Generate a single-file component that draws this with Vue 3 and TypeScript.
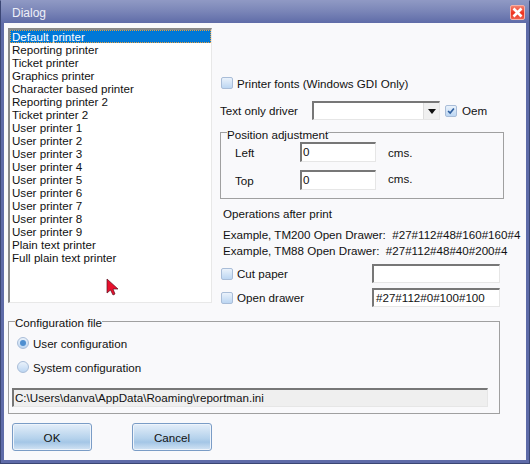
<template>
  <div class="window">
    <div class="titlebar">
      <span class="title">Dialog</span>
      <div class="close">
        <svg width="11" height="11" viewBox="0 0 11 11">
          <path d="M1.5 1.5 L9.5 9.5 M9.5 1.5 L1.5 9.5" stroke="#fff" stroke-width="2.6" />
        </svg>
      </div>
    </div>
    <div class="client">
      <div class="top">
        <ul class="list">
          <li v-for="(name, index) in printers" :key="name" :class="{ selected: index === 0 }">{{ name }}</li>
        </ul>
        <div class="options">
          <label class="check fonts"><span class="box"></span>Printer fonts (Windows GDI Only)</label>
          <div class="driver">
            <span class="driver-label">Text only driver</span>
            <div class="combo sunken">
              <span class="arrow"><i></i></span>
            </div>
            <label class="check oem">
              <span class="box">
                <svg width="12" height="12" viewBox="0 0 12 12">
                  <path d="M2.5 6 L5 8.5 L9.5 3" fill="none" stroke="#2f5f9f" stroke-width="2" />
                </svg>
              </span>
              Oem
            </label>
          </div>
          <fieldset class="position">
            <legend>Position adjustment</legend>
            <div v-for="row in positions" :key="row" class="pos-row">
              <span class="pos-label">{{ row }}</span>
              <div class="field sunken pos-input">0</div>
              <span class="unit">cms.</span>
            </div>
          </fieldset>
          <div class="ops-title">Operations after print</div>
          <div class="example first">Example, TM200 Open Drawer:&nbsp; #27#112#48#160#160#4</div>
          <div class="example">Example, TM88 Open Drawer:&nbsp; #27#112#48#40#200#4</div>
          <div class="op-row">
            <label class="check"><span class="box"></span>Cut paper</label>
            <div class="field sunken op-input"></div>
          </div>
          <div class="op-row second">
            <label class="check"><span class="box"></span>Open drawer</label>
            <div class="field sunken op-input">#27#112#0#100#100</div>
          </div>
        </div>
      </div>
      <fieldset class="config">
        <legend>Configuration file</legend>
        <label class="radio"><span class="dot on"></span>User configuration</label>
        <label class="radio"><span class="dot"></span>System configuration</label>
        <div class="field sunken path">C:\Users\danva\AppData\Roaming\reportman.ini</div>
      </fieldset>
      <div class="buttons">
        <button class="btn">OK</button>
        <button class="btn">Cancel</button>
      </div>
    </div>
    <svg class="cursor" width="14" height="18" viewBox="0 0 14 18">
      <path d="M1 1 L1 15 L4.5 12 L7 17 L9 16 L7 11 L12 11 Z" fill="#e8112d" stroke="#5a1020" stroke-width="0.7" />
    </svg>
  </div>
</template>

<script setup lang="ts">
const printers: string[] = [
  'Default printer',
  'Reporting printer',
  'Ticket printer',
  'Graphics printer',
  'Character based printer',
  'Reporting printer 2',
  'Ticket printer 2',
  'User printer 1',
  'User printer 2',
  'User printer 3',
  'User printer 4',
  'User printer 5',
  'User printer 6',
  'User printer 7',
  'User printer 8',
  'User printer 9',
  'Plain text printer',
  'Full plain text printer'
]

const positions: string[] = ['Left', 'Top']
</script>

<style>
html,
body {
  margin: 0;
  background: #fff;
}
</style>

<style scoped>
.window {
  position: relative;
  width: 530px;
  height: 464px;
  box-sizing: border-box;
  display: flex;
  flex-direction: column;
  background: #5e6ba8;
  border: 1px solid #3b4674;
  border-top-color: #8f98c4;
  padding: 0 3px 3px;
  font-family: "Liberation Sans", Arial, sans-serif;
  font-size: 11.6px;
  color: #111;
}

.titlebar {
  height: 22px;
  flex: none;
  display: flex;
  align-items: center;
  justify-content: space-between;
  margin: 0 -3px;
  padding: 0 4px 0 11px;
  background: linear-gradient(#8e98c3, #7b86b8 45%, #5f6ca8);
}

.title {
  color: #eef0f8;
  font-size: 12px;
  margin-top: 2px;
}

.close {
  width: 15px;
  height: 15px;
  box-sizing: border-box;
  display: flex;
  align-items: center;
  justify-content: center;
  border: 1px solid #f3b0a8;
  border-radius: 2px;
  background: linear-gradient(#f4826f, #ee2f1c 55%, #f0604c);
}

.client {
  flex: 1;
  min-height: 0;
  background: #f9f9fb;
  padding: 5px 0 0 4px;
}

.top {
  display: flex;
}

.list {
  width: 204px;
  height: 275px;
  box-sizing: border-box;
  margin: 0;
  padding: 0;
  list-style: none;
  background: #fff;
  border: 1px solid #e8e8e8;
  border-top: 2px solid #8a8a8a;
  border-left: 2px solid #8a8a8a;
}

.list li {
  height: 13px;
  line-height: 13px;
  padding-left: 2px;
}

.list li.selected {
  background: #0078d7;
  color: #fff;
  outline: 1px dotted #e8a03c;
  outline-offset: -1px;
}

.options {
  width: 284px;
  margin-left: 8px;
}

.check {
  display: flex;
  align-items: center;
  gap: 4px;
}

.box {
  width: 12px;
  height: 12px;
  box-sizing: border-box;
  flex: none;
  display: flex;
  align-items: center;
  justify-content: center;
  border: 1px solid #a9bdd8;
  border-radius: 2px;
  background: linear-gradient(#eaf2fb, #bcd6f2);
}

.fonts {
  margin: 48px 0 0 1px;
  height: 14px;
}

.driver {
  display: flex;
  align-items: center;
  margin-top: 11px;
  height: 19px;
}

.driver-label {
  width: 92px;
}

.sunken {
  box-sizing: border-box;
  background: #fff;
  border: 1px solid #e6e6e6;
  border-top: 2px solid #777;
  border-left: 2px solid #777;
}

.combo {
  width: 128px;
  height: 19px;
  display: flex;
  justify-content: flex-end;
}

.arrow {
  width: 15px;
  display: flex;
  align-items: center;
  justify-content: center;
  background: #f0f0f0;
  border-left: 1px solid #ddd;
}

.arrow i {
  border: 4px solid transparent;
  border-top: 5px solid #111;
  border-bottom: 0;
}

.oem {
  margin-left: 5px;
  gap: 5px;
}

fieldset {
  box-sizing: border-box;
  margin: 0;
  min-width: 0;
  border: 1px solid #a0a0a0;
}

legend {
  padding: 0;
  line-height: 13px;
}

.position {
  height: 75px;
  margin-top: 4px;
  padding: 0 0 0 14px;
}

.position legend {
  margin-left: -8px;
  padding-top: 4px;
}

.pos-row {
  display: flex;
  align-items: center;
  height: 20px;
  margin-top: 8px;
}

.pos-row:first-of-type {
  margin-top: 1px;
}

.pos-row:last-child .unit {
  margin-bottom: 4px;
}

.pos-label {
  width: 65px;
}

.field {
  line-height: 15px;
  padding-left: 1px;
}

.pos-input {
  width: 76px;
  height: 20px;
}

.unit {
  margin-left: 12px;
}

.ops-title {
  margin: 8px 0 0 3px;
  line-height: 14px;
}

.example {
  margin-left: 3px;
  line-height: 14px;
  margin-top: 2px;
  white-space: nowrap;
}

.example.first {
  margin-top: 7px;
}

.op-row {
  display: flex;
  align-items: center;
  justify-content: space-between;
  height: 19px;
  margin: 6px 4px 0 1px;
}

.op-row.second {
  margin-top: 5px;
}

.op-input {
  width: 128px;
  height: 19px;
  padding-left: 2px;
}

.config {
  width: 492px;
  height: 100px;
  margin-top: 7px;
  padding: 0 0 0 3px;
}

.config legend {
  margin-left: 3px;
  padding-top: 2px;
}

.radio {
  display: flex;
  align-items: center;
  gap: 4px;
  height: 14px;
  margin: 7px 0 0 5px;
}

.radio + .radio {
  margin-top: 10px;
}

.dot {
  width: 12px;
  height: 12px;
  box-sizing: border-box;
  flex: none;
  display: flex;
  align-items: center;
  justify-content: center;
  border: 1px solid #a9bdd8;
  border-radius: 50%;
  background: linear-gradient(#eaf2fb, #bcd6f2);
}

.dot.on::after {
  content: "";
  width: 6px;
  height: 6px;
  border-radius: 50%;
  background: #4f8fd0;
}

.path {
  width: 476px;
  height: 19px;
  margin-top: 14px;
  background: #efefef;
  padding-left: 1px;
}

.buttons {
  display: flex;
  gap: 40px;
  margin: 9px 0 0 4px;
}

.btn {
  width: 80px;
  height: 28px;
  padding: 0;
  border: 1px solid #7a9cc6;
  border-radius: 3px;
  box-shadow: inset 0 0 0 1px #eef4fb;
  background: linear-gradient(#e4eef9, #b5d2ec 55%, #a4c6e6 70%, #d4e4f4);
  font: inherit;
  color: #111;
}

.cursor {
  position: absolute;
  left: 105px;
  top: 277px;
}
</style>
